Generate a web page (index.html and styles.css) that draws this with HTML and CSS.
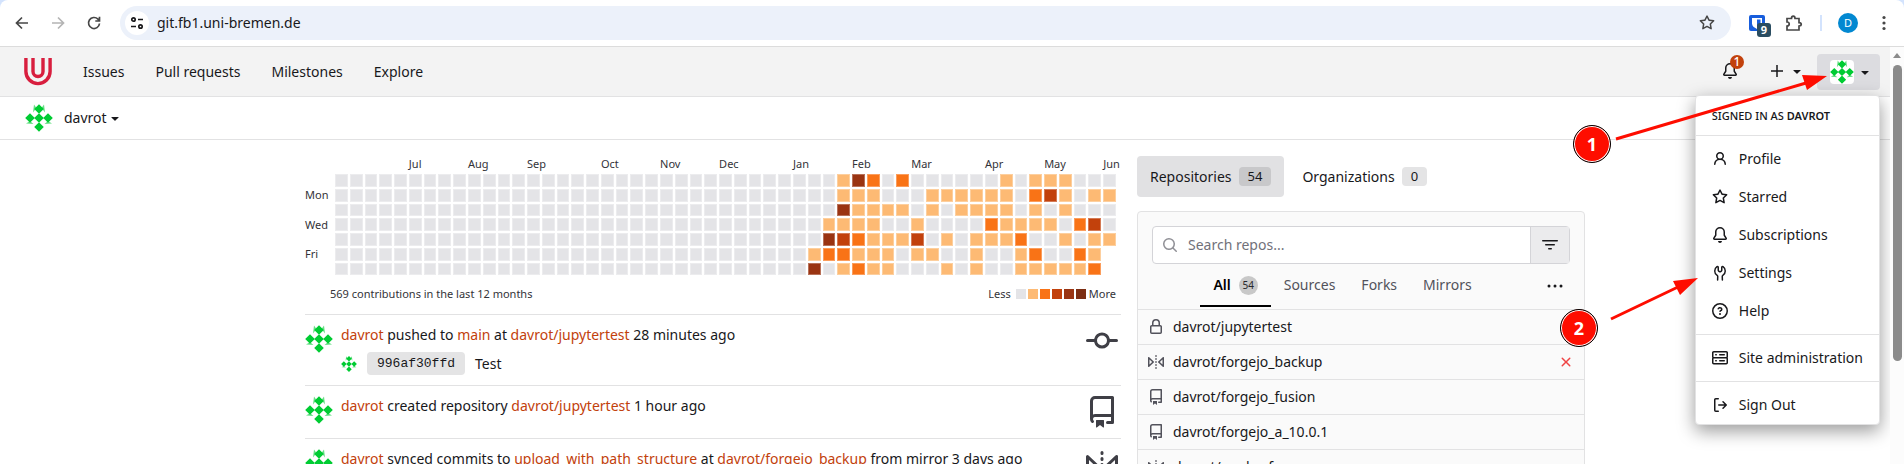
FILE: index.html
```
<!DOCTYPE html>
<html lang="en">
<head>
    <meta charset="UTF-8">
    <meta name="viewport" content="width=device-width, initial-scale=1.0">
    <title>davrot - Dashboard</title>
    <link rel="stylesheet" href="styles.css">
</head>
<body>
    <!-- Shared icons -->
    <svg class="sprite" aria-hidden="true">
        <symbol id="avatar" viewBox="0 0 28 28">
            <path fill="#0c3" d="M14 .2 18.8 5 14 9.800 9.200 5zM5 9.200 9.800 14 5 18.800.200 14zM14 9.200 18.800 14 14 18.800 9.200 14zM23 9.200 27.800 14 23 18.800 18.200 14zM14 18.200 18.800 23 14 27.800 9.200 23z"/>
            <path fill="#0c3" opacity=".6" d="M9 .5 11.500 4 8 8.500zM19 .5 16.500 4 20 8.500zM1 19.500 5 17 8.500 20zM27 19.500 23 17 19.500 20z"/>
        </symbol>
        <symbol id="caret" viewBox="0 0 16 16"><path d="m4.427 7.427 3.396 3.396a.25.25 0 0 0 .354 0l3.396-3.396A.25.25 0 0 0 11.396 7H4.604a.25.25 0 0 0-.177.427Z"/></symbol>
        <symbol id="bell" viewBox="0 0 16 16"><path d="M8 16a2 2 0 0 0 1.985-1.750c.017-.137-.097-.25-.235-.25h-3.500c-.138 0-.252.113-.235.250A2 2 0 0 0 8 16ZM3 5a5 5 0 0 1 10 0v2.947c0 .050.015.098.042.139l1.703 2.555A1.519 1.519 0 0 1 13.482 13H2.518a1.516 1.516 0 0 1-1.263-2.360l1.703-2.554A.255.255 0 0 0 3 7.947Zm5-3.500A3.500 3.500 0 0 0 4.500 5v2.947c0 .346-.102.683-.294.970l-1.703 2.556a.017.017 0 0 0-.003.010l.001.006c0 .002.002.004.004.006l.006.004.007.001h10.964l.007-.001.006-.004.004-.006.001-.007a.017.017 0 0 0-.003-.010l-1.703-2.554a1.745 1.745 0 0 1-.294-.970V5A3.500 3.500 0 0 0 8 1.500Z"/></symbol>
        <symbol id="star" viewBox="0 0 16 16"><path d="M8 .25a.75.75 0 0 1 .673.418l1.882 3.815 4.210.612a.75.75 0 0 1 .416 1.279l-3.046 2.970.719 4.192a.751.751 0 0 1-1.088.791L8 12.347l-3.766 1.980a.75.75 0 0 1-1.088-.790l.720-4.194L.818 6.374a.75.75 0 0 1 .416-1.280l4.210-.611L7.327.668A.75.75 0 0 1 8 .25Zm0 2.445L6.615 5.500a.75.75 0 0 1-.564.410l-3.097.450 2.240 2.184a.75.75 0 0 1 .216.664l-.528 3.084 2.769-1.456a.75.75 0 0 1 .698 0l2.770 1.456-.530-3.084a.75.75 0 0 1 .216-.664l2.240-2.183-3.096-.450a.75.75 0 0 1-.564-.410L8 2.694Z"/></symbol>
        <symbol id="repo" viewBox="0 0 16 16"><path d="M2 2.500A2.500 2.500 0 0 1 4.500 0h8.750a.75.75 0 0 1 .75.75v12.500a.75.75 0 0 1-.75.75h-2.500a.75.75 0 0 1 0-1.500h1.750v-2h-8a1 1 0 0 0-.714 1.700.75.75 0 1 1-1.072 1.050A2.495 2.495 0 0 1 2 11.500Zm10.500-1h-8a1 1 0 0 0-1 1v6.708A2.486 2.486 0 0 1 4.500 9h8ZM5 12.250a.25.25 0 0 1 .25-.25h3.500a.25.25 0 0 1 .25.25v3.250a.25.25 0 0 1-.4.200l-1.450-1.087a.249.249 0 0 0-.3 0L5.400 15.700a.25.25 0 0 1-.4-.200Z"/></symbol>
        <symbol id="mirror" viewBox="0 0 16 16"><path d="M15.547 3.061A.75.75 0 0 1 16 3.750v8.500a.751.751 0 0 1-1.265.545l-4.500-4.250a.75.75 0 0 1 0-1.090l4.500-4.250a.75.75 0 0 1 .812-.144ZM0 12.250v-8.500a.751.751 0 0 1 1.265-.545l4.500 4.250a.75.75 0 0 1 0 1.090l-4.500 4.250A.75.75 0 0 1 0 12.250Zm1.500-6.760v5.020L4.158 8ZM11.842 8l2.658 2.510V5.490ZM8 4a.75.75 0 0 1 .75.75v.5a.75.75 0 0 1-1.500 0v-.5A.75.75 0 0 1 8 4Zm.75-2.250v.5a.75.75 0 0 1-1.500 0v-.5a.75.75 0 0 1 1.500 0Zm0 6v.5a.75.75 0 0 1-1.500 0v-.5a.75.75 0 0 1 1.500 0ZM8 10a.75.75 0 0 1 .75.75v.5a.75.75 0 0 1-1.500 0v-.5A.75.75 0 0 1 8 10Zm0 3a.75.75 0 0 1 .75.75v.5a.75.75 0 0 1-1.500 0v-.5A.75.75 0 0 1 8 13Z"/></symbol>
    </svg>

    <!-- Browser toolbar -->
    <div class="browser-frame">
        <div class="browser-bar">
            <button class="browser-btn" aria-label="Back"><svg viewBox="0 0 16 16" class="line"><path d="M14 8H3M8 2.500 2.500 8 8 13.500"/></svg></button>
            <button class="browser-btn disabled" aria-label="Forward"><svg viewBox="0 0 16 16" class="line"><path d="M2 8h11M8 2.500 13.500 8 8 13.500"/></svg></button>
            <button class="browser-btn reload" aria-label="Reload"><svg viewBox="0 0 16 16" class="line"><path d="M13.500 8.500A5.500 5.500 0 1 1 12 4.200L13.500 6M13.500 1.800V6H9.300"/></svg></button>
            <div class="address-bar">
                <button class="site-info" aria-label="Site information"><svg viewBox="0 0 16 16" class="line"><circle cx="4.500" cy="4.500" r="1.700"/><path d="M9 4.500h5M2 11.500h5"/><circle cx="11.500" cy="11.500" r="1.700"/></svg></button>
                <input class="address-input" type="text" aria-label="Address" value="git.fb1.uni-bremen.de">
                <button class="bookmark" aria-label="Bookmark this page"><svg viewBox="0 0 16 16"><use href="#star"/></svg></button>
            </div>
            <button class="extension" aria-label="Password manager">
                <svg viewBox="0 0 16 16"><rect width="16" height="16" rx="2" fill="#175ddc"/><path fill="#fff" d="M3 3h10v5.500c0 2.500-2 4-5 5.500-3-1.500-5-3-5-5.500z"/><path fill="#175ddc" d="M8 4.500h3.500v4c0 1.500-1.500 2.500-3.500 3.500z"/></svg>
                <span class="extension-count">9</span>
            </button>
            <button class="browser-btn puzzle" aria-label="Extensions"><svg viewBox="0 0 18 18" class="line"><path d="M2 4.500h4.500c0-3.300 3.500-3.300 3.500 0h4v4.200c3 0 3 3.300 0 3.300v4H2v-4c3-.2 3-4 0-4z"/></svg></button>
            <span class="browser-divider"></span>
            <button class="profile-btn" aria-label="Profile">D</button>
            <button class="browser-menu" aria-label="Browser menu"><svg viewBox="0 0 4 16"><circle cx="2" cy="2.500" r="1.600"/><circle cx="2" cy="8" r="1.600"/><circle cx="2" cy="13.500" r="1.600"/></svg></button>
        </div>
    </div>

    <div class="viewport">
        <div class="page">
            <nav class="navbar">
                <a class="logo" href="#" aria-label="Home"><svg viewBox="0 0 28 28"><path fill="none" stroke="#d81e3e" stroke-width="3.400" d="M1.900 0v13.500a12.100 12.100 0 0 0 24.200 0V0M9 0v13.500a5 5 0 0 0 10 0V0"/></svg></a>
                <a href="#">Issues</a>
                <a href="#">Pull requests</a>
                <a href="#">Milestones</a>
                <a href="#">Explore</a>
                <div class="navbar-right">
                    <a class="notifications" href="#" aria-label="Notifications"><svg class="icon"><use href="#bell"/></svg><span class="notification-count">1</span></a>
                    <button class="create-btn" aria-label="Create"><svg class="icon" viewBox="0 0 16 16"><path d="M7.250 2h1.500v5.250H14v1.500H8.750V14h-1.500V8.750H2v-1.500h5.250z"/></svg><svg class="icon"><use href="#caret"/></svg></button>
                    <div class="user-menu">
                        <button class="user-btn" aria-label="User menu"><svg class="avatar-md"><use href="#avatar"/></svg><svg class="icon"><use href="#caret"/></svg></button>
                        <div class="dropdown">
                            <div class="dropdown-header">SIGNED IN AS <strong>DAVROT</strong></div>
                            <div class="dropdown-group">
                                <a href="#"><svg class="icon" viewBox="0 0 16 16"><path d="M10.561 8.073a6.005 6.005 0 0 1 3.432 5.142.75.75 0 1 1-1.498.070 4.500 4.500 0 0 0-8.990 0 .75.75 0 0 1-1.498-.070 6.004 6.004 0 0 1 3.431-5.142 3.999 3.999 0 1 1 5.123 0ZM10.500 5a2.500 2.500 0 1 0-5 0 2.500 2.500 0 0 0 5 0Z"/></svg>Profile</a>
                                <a href="#"><svg class="icon"><use href="#star"/></svg>Starred</a>
                                <a href="#"><svg class="icon"><use href="#bell"/></svg>Subscriptions</a>
                                <a href="#"><svg class="icon" viewBox="0 0 16 16"><path d="M5.433 2.304A4.492 4.492 0 0 0 3.500 6c0 1.598.832 3.002 2.090 3.802.518.328.929.923.902 1.640l-.130 3.560a.75.75 0 1 1-1.498-.055l.130-3.560c.003-.081-.047-.214-.208-.316A5.996 5.996 0 0 1 2 6a5.993 5.993 0 0 1 2.567-4.920 1.482 1.482 0 0 1 1.673-.040c.462.296.76.827.76 1.423v2.820c0 .082.041.160.110.206l.750.510a.25.25 0 0 0 .280 0l.750-.510A.25.25 0 0 0 9 5.282V2.463c0-.596.298-1.127.760-1.423a1.482 1.482 0 0 1 1.673.040A5.993 5.993 0 0 1 14 6a5.996 5.996 0 0 1-2.786 5.068c-.161.102-.211.235-.208.316l.130 3.563a.75.75 0 1 1-1.500.054l-.130-3.560c-.027-.716.385-1.311.902-1.640A4.495 4.495 0 0 0 12.500 6a4.492 4.492 0 0 0-1.933-3.696c-.024.017-.067.067-.067.160v2.818a1.750 1.750 0 0 1-.767 1.448l-.750.510a1.750 1.750 0 0 1-1.966 0l-.750-.510A1.750 1.750 0 0 1 5.500 5.282V2.463c0-.092-.043-.142-.067-.159Z"/></svg>Settings</a>
                                <a href="#"><svg class="icon" viewBox="0 0 16 16"><path d="M0 8a8 8 0 1 1 16 0A8 8 0 0 1 0 8Zm8-6.500a6.500 6.500 0 1 0 0 13 6.500 6.500 0 0 0 0-13ZM6.920 6.085h.001a.749.749 0 1 1-1.342-.670c.169-.339.436-.701.849-.977C6.845 4.160 7.369 4 8 4a2.756 2.756 0 0 1 1.637.525c.503.377.863.965.863 1.725 0 .448-.115.830-.329 1.150-.205.307-.470.513-.692.662-.109.072-.220.138-.313.195l-.006.004a6.240 6.240 0 0 0-.260.160.952.952 0 0 0-.276.245.75.75 0 0 1-1.248-.832c.184-.264.420-.489.692-.661.103-.067.207-.132.313-.195l.007-.004c.100-.061.182-.110.258-.161a.969.969 0 0 0 .277-.245C8.960 6.514 9 6.427 9 6.250a.612.612 0 0 0-.262-.525A1.270 1.270 0 0 0 8 5.500c-.369 0-.595.090-.740.187a1.010 1.010 0 0 0-.340.398ZM9 11a1 1 0 1 1-2 0 1 1 0 0 1 2 0Z"/></svg>Help</a>
                            </div>
                            <div class="dropdown-group">
                                <a href="#"><svg class="icon" viewBox="0 0 16 16"><path d="M1.750 1h12.500c.966 0 1.750.784 1.750 1.750v4c0 .372-.116.717-.314 1 .198.283.314.628.314 1v4a1.750 1.750 0 0 1-1.750 1.750H1.750A1.750 1.750 0 0 1 0 12.750v-4c0-.358.109-.707.314-1a1.739 1.739 0 0 1-.314-1v-4C0 1.784.784 1 1.750 1ZM1.500 2.750v4c0 .138.112.25.25.25h12.500a.25.25 0 0 0 .25-.25v-4a.25.25 0 0 0-.25-.25H1.750a.25.25 0 0 0-.25.25Zm.25 5.750a.25.25 0 0 0-.25.25v4c0 .138.112.25.25.25h12.500a.25.25 0 0 0 .25-.25v-4a.25.25 0 0 0-.25-.25ZM7 4.750A.75.75 0 0 1 7.750 4h4.500a.75.75 0 0 1 0 1.500h-4.500A.75.75 0 0 1 7 4.750ZM7.750 10h4.500a.75.75 0 0 1 0 1.500h-4.500a.75.75 0 0 1 0-1.500ZM3 4.750A.75.75 0 0 1 3.750 4h.5a.75.75 0 0 1 0 1.500h-.5A.75.75 0 0 1 3 4.750ZM3.750 10h.5a.75.75 0 0 1 0 1.500h-.5a.75.75 0 0 1 0-1.500Z"/></svg>Site administration</a>
                            </div>
                            <div class="dropdown-group last">
                                <a href="#"><svg class="icon" viewBox="0 0 16 16"><path d="M2 2.750C2 1.784 2.784 1 3.750 1h2.500a.75.75 0 0 1 0 1.500h-2.500a.25.25 0 0 0-.25.25v10.500c0 .138.112.25.25.25h2.500a.75.75 0 0 1 0 1.500h-2.500A1.750 1.750 0 0 1 2 13.250Zm10.440 4.500-1.970-1.970a.749.749 0 0 1 1.060-1.060l3.250 3.250a.75.75 0 0 1 0 1.060l-3.250 3.250a.749.749 0 1 1-1.060-1.060l1.970-1.970H6.750a.75.75 0 0 1 0-1.500Z"/></svg>Sign Out</a>
                            </div>
                        </div>
                    </div>
                </div>
            </nav>

            <div class="context-bar">
                <button class="context-btn"><svg class="avatar-lg"><use href="#avatar"/></svg><span>davrot</span><svg class="icon"><use href="#caret"/></svg></button>
            </div>

            <main class="container">
                <section class="activity">
                    <div class="heatmap">
                        <div class="heatmap-months" id="months"></div>
                        <div class="heatmap-days"><span>Mon</span><span>Wed</span><span>Fri</span></div>
                        <div class="heatmap-grid" id="heatmap"></div>
                    </div>
                    <div class="heatmap-footer">
                        <span>569 contributions in the last 12 months</span>
                        <div class="legend">
                            <span>Less</span>
                            <i class="level-0"></i><i class="level-1"></i><i class="level-2"></i><i class="level-3"></i><i class="level-4"></i><i class="level-5"></i>
                            <span>More</span>
                        </div>
                    </div>

                    <div class="feed-item">
                        <svg class="avatar-lg"><use href="#avatar"/></svg>
                        <div class="feed-body">
                            <p><a href="#">davrot</a> pushed to <a href="#">main</a> at <a href="#">davrot/jupytertest</a> 28 minutes ago</p>
                            <div class="commit"><svg class="icon"><use href="#avatar"/></svg><a class="sha" href="#">996af30ffd</a><span>Test</span></div>
                        </div>
                        <svg class="feed-icon" viewBox="0 0 16 16"><path d="M11.930 8.500a4.002 4.002 0 0 1-7.860 0H.75a.75.75 0 0 1 0-1.500h3.320a4.002 4.002 0 0 1 7.860 0h3.320a.75.75 0 0 1 0 1.500Zm-1.430-.750a2.500 2.500 0 1 0-5 0 2.500 2.500 0 0 0 5 0Z"/></svg>
                    </div>
                    <div class="feed-item">
                        <svg class="avatar-lg"><use href="#avatar"/></svg>
                        <div class="feed-body">
                            <p><a href="#">davrot</a> created repository <a href="#">davrot/jupytertest</a> 1 hour ago</p>
                        </div>
                        <svg class="feed-icon"><use href="#repo"/></svg>
                    </div>
                    <div class="feed-item">
                        <svg class="avatar-lg"><use href="#avatar"/></svg>
                        <div class="feed-body">
                            <p><a href="#">davrot</a> synced commits to <a href="#">upload_with_path_structure</a> at <a href="#">davrot/forgejo_backup</a> from mirror 3 days ago</p>
                        </div>
                        <svg class="feed-icon"><use href="#mirror"/></svg>
                    </div>
                </section>

                <aside class="sidebar">
                    <div class="tabs">
                        <a class="tab active" href="#">Repositories <span class="label">54</span></a>
                        <a class="tab" href="#">Organizations <span class="label">0</span></a>
                    </div>
                    <div class="repo-panel">
                        <div class="search">
                            <div class="search-box">
                                <svg class="icon" viewBox="0 0 16 16"><path d="M10.680 11.740a6 6 0 0 1-7.922-8.982 6 6 0 0 1 8.982 7.922l3.040 3.040a.749.749 0 1 1-1.060 1.060l-3.040-3.040ZM11.500 7a4.499 4.499 0 1 0-8.997 0A4.499 4.499 0 0 0 11.500 7Z"/></svg>
                                <input type="text" aria-label="Search repos" placeholder="Search repos...">
                            </div>
                            <button class="filter-btn" aria-label="Filter"><svg class="icon" viewBox="0 0 16 16"><path d="M.75 3h14.500a.75.75 0 0 1 0 1.500H.75a.75.75 0 0 1 0-1.500ZM3 7.750A.75.75 0 0 1 3.750 7h8.500a.75.75 0 0 1 0 1.500h-8.500A.75.75 0 0 1 3 7.750Zm3 4a.75.75 0 0 1 .75-.75h2.500a.75.75 0 0 1 0 1.500h-2.500a.75.75 0 0 1-.75-.75Z"/></svg></button>
                        </div>
                        <div class="filters">
                            <div class="filter-links">
                                <a class="active" href="#">All <span class="count">54</span></a>
                                <a href="#">Sources</a>
                                <a href="#">Forks</a>
                                <a href="#">Mirrors</a>
                            </div>
                            <button class="more-btn" aria-label="More filters"><svg class="icon" viewBox="0 0 16 16"><circle cx="2" cy="8" r="1.500"/><circle cx="8" cy="8" r="1.500"/><circle cx="14" cy="8" r="1.500"/></svg></button>
                        </div>
                        <ul class="repo-list">
                            <li><svg class="icon" viewBox="0 0 16 16"><path d="M4 4a4 4 0 0 1 8 0v2h.25c.966 0 1.750.784 1.750 1.750v5.500A1.750 1.750 0 0 1 12.250 15h-8.500A1.750 1.750 0 0 1 2 13.250v-5.500C2 6.784 2.784 6 3.750 6H4Zm8.250 3.500h-8.500a.25.25 0 0 0-.25.25v5.500c0 .138.112.25.25.25h8.500a.25.25 0 0 0 .25-.25v-5.500a.25.25 0 0 0-.25-.25ZM10.500 6V4a2.500 2.500 0 1 0-5 0v2Z"/></svg><a href="#">davrot/jupytertest</a></li>
                            <li><svg class="icon"><use href="#mirror"/></svg><a href="#">davrot/forgejo_backup</a><svg class="icon failed" viewBox="0 0 16 16"><path d="M3.720 3.720a.75.75 0 0 1 1.060 0L8 6.940l3.220-3.220a.749.749 0 1 1 1.060 1.060L9.060 8l3.220 3.220a.749.749 0 1 1-1.060 1.060L8 9.060l-3.220 3.220a.749.749 0 1 1-1.060-1.060L6.940 8 3.720 4.780a.75.75 0 0 1 0-1.060Z"/></svg></li>
                            <li><svg class="icon"><use href="#repo"/></svg><a href="#">davrot/forgejo_fusion</a></li>
                            <li><svg class="icon"><use href="#repo"/></svg><a href="#">davrot/forgejo_a_10.0.1</a></li>
                            <li><svg class="icon"><use href="#mirror"/></svg><a href="#">davrot/work_of</a></li>
                        </ul>
                    </div>
                </aside>
            </main>
        </div>
        <div class="scrollbar"><span class="scroll-up"></span><span class="scroll-thumb"></span></div>
    </div>

    <!-- Numbered steps drawn over the page -->
    <svg class="arrows" aria-hidden="true">
        <g stroke="#fe0d00" stroke-width="3" fill="#fe0d00">
            <path d="M1616 139 1806 83M1611 319 1678 287"/>
            <path stroke="none" d="M1827 76 1802 75 1807 90zM1698 278 1673 281 1680 295z"/>
        </g>
    </svg>
    <span class="step step-one">1</span>
    <span class="step step-two">2</span>

    <script src="heatmap.js"></script>
</body>
</html>
```
FILE: styles.css
```
* {
    margin: 0;
    padding: 0;
    box-sizing: border-box;
}

body {
    height: 100vh;
    display: flex;
    flex-direction: column;
    overflow: hidden;
    position: relative;
    font-family: "Noto Sans", sans-serif;
    font-size: 14px;
    line-height: 20px;
    color: #18181b;
    background: #fff;
}

a {
    color: inherit;
    text-decoration: none;
}

button,
input {
    font: inherit;
    color: inherit;
    border: none;
    background: none;
    outline: none;
}

button {
    display: flex;
    align-items: center;
    cursor: pointer;
}

svg {
    flex-shrink: 0;
    fill: currentColor;
}

.sprite {
    display: none;
}

.icon {
    width: 16px;
    height: 16px;
}

.line {
    fill: none;
    stroke: currentColor;
    stroke-width: 1.7;
}

.avatar-md {
    width: 24px;
    height: 24px;
    background: #fff;
    border-radius: 4px;
}

.avatar-lg {
    width: 28px;
    height: 28px;
}

/* Browser toolbar */
.browser-frame {
    background: #d3e3fd;
}

.browser-bar {
    display: flex;
    align-items: center;
    height: 47px;
    padding: 0 18px 1px 14px;
    background: #fff;
    border-bottom: 1px solid #dcdcdc;
    border-radius: 8px 8px 0 0;
}

.browser-btn {
    width: 16px;
    height: 16px;
    margin-right: 20px;
    color: #474747;
}

.browser-btn svg {
    width: 16px;
    height: 16px;
}

.browser-btn.reload {
    margin-right: 18px;
}

.browser-btn.disabled {
    color: #b4b4b4;
}

.address-bar {
    flex: 1;
    display: flex;
    align-items: center;
    height: 34px;
    padding: 0 16px 0 5px;
    border-radius: 17px;
    background: #ecf1fa;
}

.site-info {
    width: 24px;
    height: 24px;
    justify-content: center;
    border-radius: 50%;
    background: #fff;
}

.site-info svg {
    width: 16px;
    height: 16px;
}

.address-input {
    flex: 1;
    padding: 0 8px;
}

.bookmark svg {
    width: 16px;
    height: 16px;
    color: #474747;
}

.extension {
    position: relative;
    margin: 0 20px 0 18px;
}

.extension svg {
    width: 16px;
    height: 16px;
}

.extension-count {
    position: absolute;
    left: 8px;
    top: 8px;
    width: 14px;
    height: 14px;
    border-radius: 3px;
    background: #2a4d61;
    color: #fff;
    font-size: 11px;
    font-weight: bold;
    line-height: 13px;
}

.puzzle svg {
    width: 18px;
    height: 18px;
}

.browser-btn.puzzle {
    width: 18px;
    height: 18px;
    margin-right: 17px;
}

.browser-divider {
    width: 2px;
    height: 16px;
    margin-right: 16px;
    background: #d3e3fd;
}

.profile-btn {
    width: 20px;
    height: 20px;
    margin-right: 24px;
    justify-content: center;
    border-radius: 50%;
    background: #0288d1;
    color: #fff;
    font-size: 11px;
}

.browser-menu {
    color: #474747;
}

.browser-menu svg {
    width: 4px;
    height: 16px;
}

/* Page and scrollbar */
.viewport {
    flex: 1;
    display: flex;
    min-height: 0;
}

.page {
    flex: 1;
    overflow: hidden;
}

.scrollbar {
    display: flex;
    flex-direction: column;
    align-items: center;
    gap: 7px;
    width: 14px;
    padding-top: 6px;
    background: #fcfcfc;
}

.scroll-up {
    border: 4px solid transparent;
    border-top: 0;
    border-bottom: 5px solid #8b8b8b;
}

.scroll-thumb {
    width: 9px;
    height: 72%;
    border-radius: 5px;
    background: #8b8b8b;
}

/* Navbar */
.navbar {
    display: flex;
    align-items: center;
    gap: 31px;
    height: 50px;
    padding: 0 10px 0 24px;
    background: #f3f3f3;
    border-bottom: 1px solid #e2e2e3;
}

.logo svg {
    display: block;
    width: 28px;
    height: 28px;
}

.navbar-right {
    display: flex;
    align-items: center;
    margin-left: auto;
}

.notifications {
    position: relative;
    height: 18px;
    margin-right: 31px;
}

.notification-count {
    position: absolute;
    left: 8px;
    top: -8px;
    width: 14px;
    height: 14px;
    border-radius: 50%;
    background: #c2410c;
    color: #fff;
    font-size: 12px;
    font-weight: 500;
    line-height: 14px;
    text-align: center;
}

.create-btn {
    gap: 4px;
    padding-bottom: 2px;
    margin-right: 12px;
}

.user-menu {
    position: relative;
}

.user-btn {
    gap: 3px;
    height: 36px;
    padding: 0 7px 0 13px;
    border-radius: 4px;
    background: #dcdce0;
}

.dropdown {
    position: absolute;
    top: 41px;
    right: 0;
    z-index: 10;
    width: max-content;
    background: #fff;
    border: 1px solid #e2e2e3;
    border-radius: 4px;
    box-shadow: 0 6px 18px rgba(0, 0, 0, 0.4);
}

.dropdown-header {
    padding: 10px 16px 9px;
    font-size: 11px;
    font-weight: 500;
}

.dropdown-header strong {
    font-weight: 600;
}

.dropdown-group {
    padding: 4px 0;
    border-top: 1px solid #e2e2e3;
}

.dropdown-group.last {
    padding-bottom: 0;
}

.dropdown-group a {
    display: flex;
    align-items: center;
    gap: 11px;
    height: 38px;
    padding: 0 16px;
}

/* Dashboard context switcher */
.context-bar {
    display: flex;
    align-items: center;
    height: 43px;
    padding: 0 25px;
    border-bottom: 1px solid #e2e2e3;
}

.context-btn span {
    margin-left: 11px;
}

.container {
    display: flex;
    align-items: flex-start;
    gap: 16px;
    max-width: 1280px;
    margin: 16px auto 0;
}

.activity {
    flex: 1;
    min-width: 0;
}

/* Heatmap */
.heatmap {
    display: grid;
    grid-template-columns: 30px 1fr;
    padding-right: 5px;
    font-size: 11px;
    line-height: 16px;
    color: #333338;
}

.heatmap-months {
    grid-column: 2;
    display: grid;
    grid-template-columns: repeat(53, minmax(0, 1fr));
    column-gap: 2px;
    margin-bottom: 2px;
}

.heatmap-months span {
    white-space: nowrap;
}

.heatmap-days {
    display: flex;
    flex-direction: column;
    justify-content: space-evenly;
}

.heatmap-grid {
    display: grid;
    grid-template-columns: repeat(53, minmax(0, 1fr));
    grid-template-rows: repeat(7, auto);
    grid-auto-flow: column;
    gap: 2px;
}

.heatmap-grid i {
    aspect-ratio: 1;
    box-shadow: inset 0 0 0 1px rgba(255, 255, 255, 0.3);
}

.heatmap-footer {
    display: flex;
    justify-content: space-between;
    padding: 9px 5px 0 25px;
    margin-bottom: 10px;
    font-size: 11px;
    color: #333338;
}

.legend {
    display: flex;
    align-items: center;
    gap: 2px;
}

.legend i {
    width: 10px;
    height: 10px;
}

.legend span:first-child {
    margin-right: 3px;
}

.legend span:last-child {
    margin-left: 1px;
}

.level-0 { background: #e4e4e7; }
.level-1 { background: #fdba74; }
.level-2 { background: #f97316; }
.level-3 { background: #c2410c; }
.level-4 { background: #9a3412; }
.level-5 { background: #7c2d12; }

/* Activity feed */
.feed-item {
    display: flex;
    align-items: flex-start;
    gap: 8px;
    padding: 10px 3px 10px 0;
    border-top: 1px solid #e2e2e3;
}

.feed-body {
    flex: 1;
    min-width: 0;
}

.feed-body p a {
    color: #c2410c;
}

.feed-icon {
    width: 32px;
    height: 32px;
    color: #3f3f46;
}

.commit {
    display: flex;
    align-items: center;
    gap: 10px;
    margin-top: 7px;
}

.sha {
    padding: 0 10px;
    border-radius: 4px;
    background: #e4e4e5;
    font-family: "Liberation Mono", monospace;
    font-size: 13px;
    line-height: 23px;
}

/* Sidebar */
.sidebar {
    width: 448px;
}

.tabs {
    display: flex;
    gap: 5px;
    margin-bottom: 14px;
}

.tab {
    display: flex;
    align-items: center;
    gap: 7px;
    height: 41px;
    padding: 0 13px;
    border-radius: 4px;
}

.tab.active {
    background: #e1e1e3;
}

.label {
    padding: 0 9px;
    border-radius: 4px;
    background: #e4e4e5;
    font-size: 13px;
    line-height: 19px;
}

.tab.active .label {
    background: #c8c8ca;
}

.repo-panel {
    background: #fafafa;
    border: 1px solid #e2e2e3;
    border-radius: 4px;
}

.search {
    display: flex;
    height: 38px;
    margin: 14px 14px 0;
    border: 1px solid #d4d4d8;
    border-radius: 4px;
    background: #fff;
}

.search-box {
    flex: 1;
    display: flex;
    align-items: center;
    gap: 10px;
    padding-left: 9px;
    color: #909096;
}

.search-box input {
    flex: 1;
    color: #18181b;
}

.search-box input::placeholder {
    color: #71717a;
}

.filter-btn {
    width: 39px;
    justify-content: center;
    border-left: 1px solid #d4d4d8;
    background: #ebebed;
}

.filters {
    display: flex;
    align-items: flex-end;
    height: 46px;
    padding-right: 21px;
    border-bottom: 1px solid #e2e2e3;
}

.filter-links {
    flex: 1;
    display: flex;
    justify-content: center;
    margin-bottom: 2px;
    color: #52525b;
}

.filter-links a {
    display: flex;
    align-items: center;
    gap: 8px;
    height: 42px;
    padding: 0 13px;
    border-bottom: 2px solid transparent;
}

.filter-links .active {
    color: #000;
    font-weight: 600;
    border-color: #000;
}

.count {
    width: 19px;
    border-radius: 50%;
    background: #c8c8c8;
    color: #27272a;
    font-size: 10px;
    font-weight: 400;
    line-height: 19px;
    text-align: center;
}

.more-btn {
    height: 46px;
}

.repo-list {
    list-style: none;
}

.repo-list li {
    display: flex;
    align-items: center;
    gap: 9px;
    height: 35px;
    padding: 0 10px;
    border-bottom: 1px solid #e2e2e3;
}

.repo-list .icon {
    color: #52525b;
}

.repo-list .failed {
    margin-left: auto;
    color: #ef4444;
}

/* Step markers */
.arrows {
    position: absolute;
    inset: 0;
    z-index: 20;
    width: 100%;
    height: 100%;
    pointer-events: none;
}

.step {
    position: absolute;
    z-index: 21;
    width: 38px;
    height: 38px;
    border: 1px solid #000;
    border-radius: 50%;
    background: #fe0d00;
    box-shadow: inset 0 0 0 1px #fff;
    color: #fff;
    font-size: 18px;
    font-weight: bold;
    line-height: 36px;
    text-align: center;
}

.step-one {
    left: 1573px;
    top: 125px;
}

.step-two {
    left: 1560px;
    top: 309px;
}
```
FILE: heatmap.js
```
// contribution levels of the weeks from the end of January, one string per weekday
const firstActiveWeek = 32;
const weekdays = [
    '001420200000010111000',
    '001110001111110231011',
    '004111101011110101000',
    '011110010000211110230',
    '043211130101112001011',
    '12211101100100120021',
    '40121100010100111112'
];
const months = { Jul: 5, Aug: 9, Sep: 13, Oct: 18, Nov: 22, Dec: 26, Jan: 31, Feb: 35, Mar: 39, Apr: 44, May: 48, Jun: 52 };

const grid = document.getElementById('heatmap');
for (let week = 0; week < 53; week++) {
    for (const levels of weekdays) {
        const level = week < firstActiveWeek ? '0' : levels[week - firstActiveWeek];
        if (level === undefined) continue;
        const cell = document.createElement('i');
        cell.className = 'level-' + level;
        grid.appendChild(cell);
    }
}

const monthRow = document.getElementById('months');
for (const [name, week] of Object.entries(months)) {
    const label = document.createElement('span');
    label.textContent = name;
    label.style.gridColumn = week + 1;
    monthRow.appendChild(label);
}
```
